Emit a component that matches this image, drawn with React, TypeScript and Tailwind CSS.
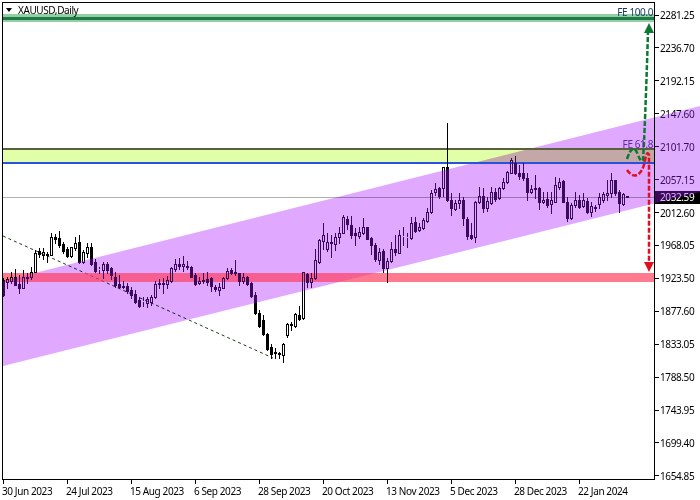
const PRICES = ['2281.25', '2236.70', '2192.15', '2147.60', '2101.70', '2057.15', '2012.60', '1968.05', '1923.50', '1877.60', '1833.05', '1788.50', '1743.95', '1699.40', '1654.85']
const DATES = ['30 Jun 2023', '24 Jul 2023', '15 Aug 2023', '6 Sep 2023', '28 Sep 2023', '20 Oct 2023', '13 Nov 2023', '5 Dec 2023', '28 Dec 2023', '22 Jan 2024']

// one bar every 4px from x=3: high, body top, body bottom, low, filled
const BARS: number[][] = [
  [278, 280, 295, 296, 1], [277, 279, 282, 288, 0], [272, 277, 281, 283, 0], [269, 277, 285, 285, 1],
  [275, 284, 288, 293, 1], [270, 277, 288, 288, 0], [273, 277, 278, 283, 0], [267, 272, 277, 279, 0],
  [250, 253, 272, 272, 0], [248, 251, 254, 257, 1], [248, 252, 255, 259, 0], [252, 254, 255, 262, 0],
  [233, 237, 255, 255, 0], [234, 237, 239, 243, 1], [231, 238, 245, 247, 1], [242, 244, 251, 253, 1],
  [247, 249, 256, 257, 1], [247, 247, 256, 257, 0], [237, 243, 248, 250, 0], [235, 242, 262, 263, 1],
  [250, 252, 262, 263, 0], [243, 247, 253, 257, 0], [243, 247, 264, 265, 1], [259, 262, 271, 272, 1],
  [267, 269, 269, 273, 0], [262, 264, 270, 278, 0], [262, 264, 270, 273, 1], [267, 268, 275, 279, 1],
  [272, 277, 285, 287, 1], [275, 284, 287, 288, 1], [281, 286, 287, 288, 0], [283, 286, 291, 293, 1],
  [287, 290, 295, 298, 1], [290, 294, 302, 303, 1], [297, 300, 306, 307, 1], [297, 301, 301, 306, 0],
  [297, 299, 303, 307, 0], [295, 297, 302, 305, 0], [281, 284, 297, 298, 0], [279, 283, 284, 288, 0],
  [278, 283, 284, 293, 0], [276, 280, 284, 288, 0], [267, 268, 281, 282, 0], [259, 264, 269, 271, 0],
  [258, 264, 266, 269, 1], [256, 264, 266, 271, 0], [261, 266, 267, 269, 0], [266, 267, 277, 277, 1],
  [273, 275, 284, 285, 1], [277, 281, 283, 284, 0], [273, 280, 281, 283, 0], [272, 279, 282, 285, 1],
  [277, 278, 286, 291, 1], [285, 287, 289, 291, 1], [283, 287, 290, 295, 0], [277, 278, 288, 288, 0],
  [268, 271, 278, 279, 0], [268, 270, 273, 274, 1], [260, 272, 273, 275, 0], [273, 273, 281, 285, 1],
  [273, 277, 281, 283, 0], [276, 277, 284, 285, 1], [282, 283, 296, 297, 1], [292, 295, 313, 314, 1],
  [310, 313, 326, 327, 1], [315, 320, 334, 335, 1], [333, 334, 349, 350, 1], [344, 347, 354, 358, 1],
  [348, 352, 353, 358, 0], [352, 353, 354, 358, 0], [343, 344, 355, 362, 0], [323, 324, 335, 337, 0],
  [322, 324, 325, 330, 0], [313, 314, 326, 327, 0], [306, 315, 319, 320, 1], [272, 272, 318, 319, 0],
  [273, 274, 282, 287, 1], [273, 278, 282, 287, 0], [249, 260, 278, 279, 0], [239, 240, 262, 263, 0],
  [223, 235, 241, 249, 0], [233, 242, 249, 251, 0], [235, 242, 243, 257, 0], [233, 237, 244, 250, 0],
  [227, 233, 237, 243, 0], [215, 217, 233, 233, 0], [216, 219, 224, 229, 1], [216, 225, 235, 238, 1],
  [228, 233, 235, 245, 1], [227, 232, 236, 238, 0], [218, 227, 233, 234, 0], [227, 227, 239, 239, 1],
  [237, 238, 245, 254, 1], [243, 245, 259, 261, 1], [248, 252, 260, 264, 0], [249, 251, 268, 272, 1],
  [258, 261, 268, 282, 0], [242, 249, 261, 262, 0], [235, 249, 252, 255, 1], [230, 235, 253, 253, 0],
  [227, 236, 236, 245, 0], [233, 237, 237, 247, 0], [217, 223, 238, 239, 0], [217, 222, 231, 232, 1],
  [223, 227, 230, 231, 0], [218, 220, 228, 229, 0], [208, 212, 221, 222, 0], [190, 193, 212, 213, 0],
  [183, 189, 192, 195, 0], [187, 188, 196, 198, 1], [167, 167, 188, 196, 0], [123, 167, 200, 201, 1],
  [193, 200, 208, 215, 1], [200, 203, 209, 210, 0], [193, 200, 203, 208, 0], [197, 200, 218, 225, 1],
  [217, 219, 236, 239, 1], [223, 235, 238, 239, 1], [201, 202, 237, 242, 0], [187, 196, 202, 203, 0],
  [188, 196, 208, 212, 1], [197, 201, 208, 211, 0], [187, 192, 203, 204, 0], [188, 192, 199, 201, 1],
  [187, 188, 198, 199, 0], [178, 182, 188, 189, 0], [171, 172, 182, 183, 0], [158, 160, 173, 173, 0],
  [156, 163, 173, 174, 1], [165, 173, 176, 179, 1], [163, 173, 178, 180, 1], [173, 178, 192, 200, 1],
  [185, 189, 192, 193, 0], [175, 188, 189, 198, 0], [187, 188, 202, 209, 1], [192, 200, 202, 203, 0],
  [192, 199, 205, 207, 1], [192, 200, 204, 213, 0], [177, 185, 202, 202, 0], [178, 182, 187, 189, 0],
  [180, 181, 202, 202, 1], [197, 202, 218, 221, 1], [203, 205, 218, 219, 0], [192, 200, 205, 207, 0],
  [195, 200, 207, 208, 1], [193, 200, 206, 207, 0], [198, 201, 212, 213, 1], [202, 206, 212, 216, 0],
  [205, 207, 208, 211, 0], [193, 197, 204, 208, 0], [192, 194, 200, 202, 0], [180, 193, 195, 200, 0],
  [173, 180, 193, 197, 0], [180, 180, 193, 195, 1], [190, 192, 203, 212, 1], [193, 194, 204, 205, 0],
  [196, 196, 197, 197, 1],
]

function Candles({ color }: { color: string }) {
  return (
    <>
      {BARS.map(([high, top, bottom, low, filled], i) => {
        const x = 3 + i * 4
        return (
          <g key={i}>
            <line x1={x + 0.5} x2={x + 0.5} y1={high} y2={top} stroke={color} />
            <line x1={x + 0.5} x2={x + 0.5} y1={bottom + 1} y2={low + 1} stroke={color} />
            <rect x={x - 0.5} y={top + 0.5} width={2} height={bottom - top} fill={filled ? color : 'none'} stroke={color} />
          </g>
        )
      })}
    </>
  )
}

function ChartDrawing() {
  return (
    <svg className="absolute inset-0" width={700} height={500} viewBox="0 0 700 500" fill="none">
      <defs>
        <clipPath id="channel">
          <polygon points="3,281 654,117.5 654,203.5 3,366" />
        </clipPath>
      </defs>
      <line x1={3} x2={654} y1={197.5} y2={197.5} stroke="#b0b0b0" />
      <line x1={3} y1={236} x2={273} y2={358} stroke="#1c3a1c" strokeDasharray="3 3" />
      <rect x={3} y={14} width={651} height={8} fill="#93cfa4" />
      <rect x={3} y={17} width={651} height={3} fill="#1f7a45" />
      <polygon points="3,281 654,117.5 654,203.5 3,366" fill="#e0a8ff" className="mix-blend-multiply" />
      <polygon points="655,117.3 700,106 700,192 655,203.3" fill="#a71cfa" fillOpacity={0.36} />
      <rect x={3} y={150} width={651} height={13} fill="#e0ffa8" className="mix-blend-multiply" />
      <rect x={3} y={148} width={651} height={2} fill="#5a5f3c" />
      <rect x={3} y={273} width={651} height={9} fill="#ff4060" fillOpacity={0.7} />
      <rect x={3} y={162} width={651} height={2} fill="#2a50e0" />
      <Candles color="#000" />
      <g clipPath="url(#channel)">
        <Candles color="#3c0a5a" />
      </g>
      <path d="M627 159 Q633 141 638 155 Q641 163 643 160 Q645 130 648 32" stroke="#0a7a30" strokeWidth={2.5} strokeDasharray="5 2" />
      <polygon points="649,23 654,33 644,33" fill="#0a7a30" />
      <path d="M627 170 Q632 177 637 175 Q643 172 645 160 Q647 150 649 155 L649 263" stroke="#e01020" strokeWidth={2.5} strokeDasharray="5 2" />
      <polygon points="649,272 654,262 644,262" fill="#e01020" />
    </svg>
  )
}

export default function App() {
  return (
    <div className="relative flex w-[700px] h-[500px] overflow-hidden bg-white pl-[2px] pt-[2px] text-[10px] tracking-[-0.4px] text-black font-['Noto_Sans',sans-serif]">
      <div className="w-[653px] shrink-0">
        <div className="h-[478px] border border-black" />
        <div className="flex pl-px">
          {DATES.map((d) => (
            <div key={d} className="w-[64px] shrink-0">
              <div className="w-px h-1 bg-black" />
              <div className="-ml-px leading-[12px] mt-[1px] whitespace-nowrap">{d}</div>
            </div>
          ))}
        </div>
      </div>
      <div className="relative mt-[7px] flex h-[473px] flex-1 flex-col justify-between">
        {PRICES.map((p) => (
          <div key={p} className="flex h-3 items-center">
            <div className="w-1 h-px bg-black" />
            <span className="ml-[1px] leading-3">{p}</span>
          </div>
        ))}
        <div className="absolute left-0 right-0 top-[182px] h-[13px] bg-black pl-[5px] leading-[13px] text-white">2032.59</div>
      </div>
      <ChartDrawing />
      <div className="absolute left-[6px] top-[8px] h-0 w-0 border-x-[3.5px] border-t-[4px] border-x-transparent border-t-black" />
      <div className="absolute left-[18px] top-[4px] leading-3">XAUUSD,Daily</div>
      <div className="absolute right-[47px] top-[6px] leading-3 text-[#1a3a6a]">FE 100.0</div>
      <div className="absolute right-[47px] top-[138px] leading-3 text-[#5a2aa0]">FE 61.8</div>
    </div>
  )
}
